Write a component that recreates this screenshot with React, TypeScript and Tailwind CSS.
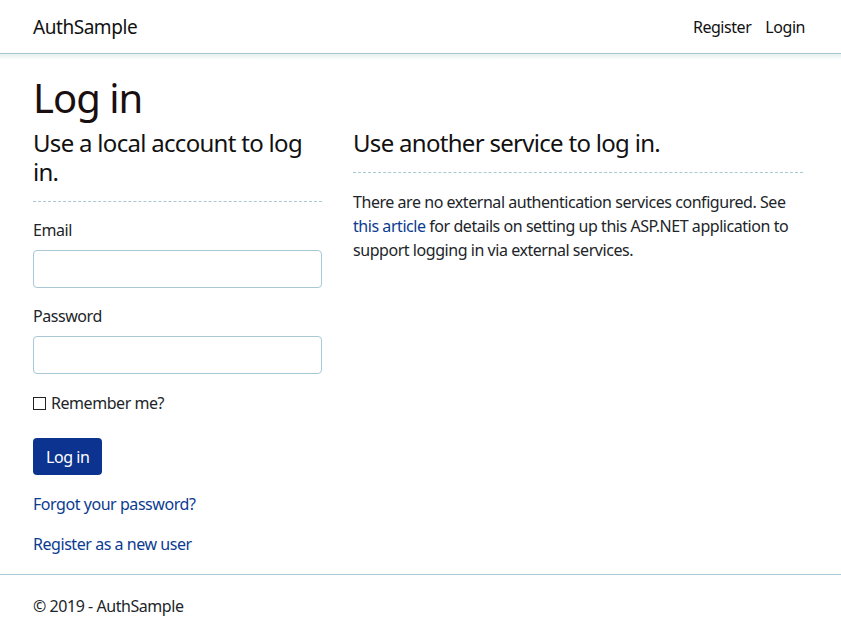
export default function App() {
  return (
    <div
      className="min-h-[634px] bg-white text-[#212529] text-[16px] leading-[24px] tracking-[-0.45px]"
      style={{ fontFamily: '"Segoe UI", "Noto Sans", sans-serif' }}
    >
      <header className="h-[54px] border-b border-[#a8c8d6] flex items-center justify-between pl-[33px] pr-[36px]">
        <a href="#" className="text-[19px] text-[#111] pt-[1px]">
          AuthSample
        </a>
        <nav className="flex gap-[14px] text-[16px] text-[#111] pt-[1px]">
          <a href="#">Register</a>
          <a href="#">Login</a>
        </nav>
      </header>
      <div className="h-[6px] bg-gradient-to-b from-[#e6f0ef] to-white" />

      <main className="pl-[33px] pr-[38px] pt-[14px] h-[514px]">
        <h1 className="text-[40px] leading-[48px] text-[#1a0f10] tracking-[-1px]">Log in</h1>
        <div className="flex gap-[31px]">
          <section className="w-[289px] shrink-0">
            <h4 className="text-[24px] leading-[29px] mt-[6px] text-[#111] tracking-[-0.7px]">
              Use a local account to log in.
            </h4>
            <hr className="mt-[15px] border-0 border-t border-dashed border-[#a8c8d6]" />
            <form className="mt-[16px]" onSubmit={(e) => e.preventDefault()}>
              <label className="block mb-[8px]">Email</label>
              <input
                type="email"
                className="block w-full h-[38px] rounded-[4px] border border-[#a8c8d6] px-3 outline-none"
              />
              <label className="block mt-[16px] mb-[8px]">Password</label>
              <input
                type="password"
                className="block w-full h-[38px] rounded-[4px] border border-[#a8c8d6] px-3 outline-none"
              />
              <label className="flex items-center mt-[17px]">
                <span className="w-[13px] h-[13px] border border-[#222] mr-[5px]" />
                Remember me?
              </label>
              <button
                type="submit"
                className="mt-[23px] h-[37px] px-[13px] rounded-[4px] bg-[#0b338f] text-white"
              >
                Log in
              </button>
              <p className="mt-[17px]">
                <a href="#" className="text-[#0b3b91]">
                  Forgot your password?
                </a>
              </p>
              <p className="mt-[16px]">
                <a href="#" className="text-[#0b3b91]">
                  Register as a new user
                </a>
              </p>
            </form>
          </section>
          <section className="flex-1">
            <h4 className="text-[24px] leading-[29px] mt-[6px] text-[#111] tracking-[-0.7px]">
              Use another service to log in.
            </h4>
            <hr className="mt-[15px] border-0 border-t border-dashed border-[#a8c8d6]" />
            <p className="mt-[17px]">
              There are no external authentication services configured. See{" "}
              <a href="#" className="text-[#0b3b91]">
                this article
              </a>{" "}
              for details on setting up this ASP.NET application to support logging in via external services.
            </p>
          </section>
        </div>
      </main>

      <footer className="border-t border-[#a8c8d6] h-[59px] flex items-center pl-[33px] pt-[4px]">
        <span>© 2019 - AuthSample</span>
      </footer>
    </div>
  );
}
